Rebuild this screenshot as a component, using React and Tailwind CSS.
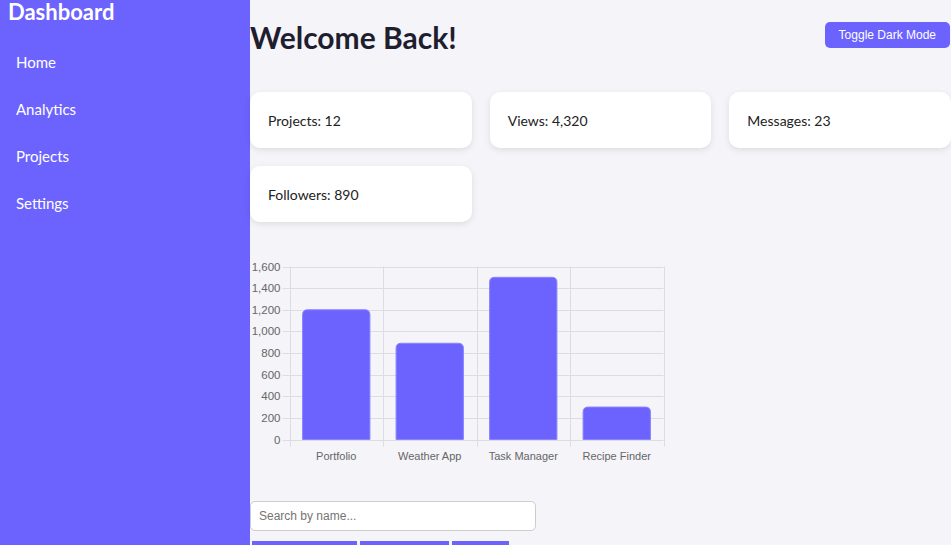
import React from "react";

const projects = [
  { name: "Portfolio", views: 1200 },
  { name: "Weather App", views: 890 },
  { name: "Task Manager", views: 1500 },
  { name: "Recipe Finder", views: 300 },
];

function ViewsChart() {
  const left = 39.5;
  const right = 413.5;
  const top = 12.5;
  const bottom = 185.5;
  const max = 1600;
  const colW = (right - left) / projects.length;
  const yOf = (v) => bottom - ((bottom - top) * v) / max;
  const ticks = [0, 200, 400, 600, 800, 1000, 1200, 1400, 1600];

  return (
    <svg width="420" height="215" className="block" style={{ fontFamily: "'Liberation Sans', Arial, sans-serif" }}>
      {ticks.map((t) => (
        <g key={t}>
          <line x1={left - 7} x2={right} y1={Math.round(yOf(t)) + 0.5} y2={Math.round(yOf(t)) + 0.5} stroke="#dcdce2" />
          <text x={left - 9} y={yOf(t) + 4} textAnchor="end" fontSize="11.5" fill="#666">
            {t.toLocaleString("en-US")}
          </text>
        </g>
      ))}
      {[0, 1, 2, 3, 4].map((i) => (
        <line key={i} x1={Math.round(left + i * colW) + 0.5} x2={Math.round(left + i * colW) + 0.5} y1={top} y2={bottom + 7} stroke="#dcdce2" />
      ))}
      {projects.map((p, i) => {
        const bw = colW * 0.72;
        const x = left + i * colW + (colW - bw) / 2;
        const y = yOf(p.views);
        const r = 5;
        return (
          <g key={p.name}>
            <path
              d={`M${x} ${bottom} V${y + r} Q${x} ${y} ${x + r} ${y} H${x + bw - r} Q${x + bw} ${y} ${x + bw} ${y + r} V${bottom} Z`}
              fill="#6c63ff"
              stroke="#8a83ff"
              strokeWidth="1"
            />
            <text x={left + i * colW + colW / 2} y={bottom + 20} textAnchor="middle" fontSize="11" fill="#666">
              {p.name}
            </text>
          </g>
        );
      })}
    </svg>
  );
}

export default function App() {
  return (
    <div className="flex h-[545px] overflow-hidden" style={{ fontFamily: "'Segoe UI', Lato, 'Open Sans', sans-serif" }}>
      {/* Sidebar */}
      <aside className="w-[250px] shrink-0 bg-[#6c63ff] text-white">
        <h2 className="pl-2 text-[22px] font-bold leading-6">Dashboard</h2>
        <ul className="mt-[15px]">
          {["Home", "Analytics", "Projects", "Settings"].map((item) => (
            <li key={item} className="flex h-[47px] items-center pl-4 text-[15px]">
              {item}
            </li>
          ))}
        </ul>
      </aside>

      {/* Main */}
      <main className="flex-1 bg-[#f4f4f9] text-[#222]">
        <header className="flex h-[74px] items-center justify-between">
          <h1 className="text-[30px] font-bold text-[#1e1e2f]">Welcome Back!</h1>
          <button className="mr-px mb-1 h-[26px] rounded-[5px] bg-[#6c63ff] px-[14px] text-[12px] text-white" style={{ fontFamily: "'Liberation Sans', Arial, sans-serif" }}>
            Toggle Dark Mode
          </button>
        </header>

        <div className="mt-[18px] grid grid-cols-3 gap-[18px]">
          {["Projects: 12", "Views: 4,320", "Messages: 23", "Followers: 890"].map((s) => (
            <div key={s} className="flex h-[56px] items-center rounded-[10px] bg-white px-[18px] text-[14px] shadow-[0_2px_6px_rgba(0,0,0,0.1)]">
              {s}
            </div>
          ))}
        </div>

        <div className="mt-[32px]">
          <ViewsChart />
        </div>

        <div className="mt-[32px]" style={{ fontFamily: "'Liberation Sans', Arial, sans-serif" }}>
          <input
            type="text"
            placeholder="Search by name..."
            className="h-[30px] w-[286px] rounded-[5px] border border-[#ccc] bg-white px-2 text-[12px] placeholder:text-[#757575]"
          />
          <div className="mt-[10px] flex gap-[3px] pl-[2px]">
            <button className="h-[30px] w-[105px] bg-[#6c63ff] text-[12px] text-white">Sort by Name</button>
            <button className="h-[30px] w-[89px] bg-[#6c63ff] text-[12px] text-white">Sort by Views</button>
            <button className="h-[30px] w-[57px] bg-[#6c63ff] text-[12px] text-white">Reset</button>
          </div>
        </div>
      </main>
    </div>
  );
}
